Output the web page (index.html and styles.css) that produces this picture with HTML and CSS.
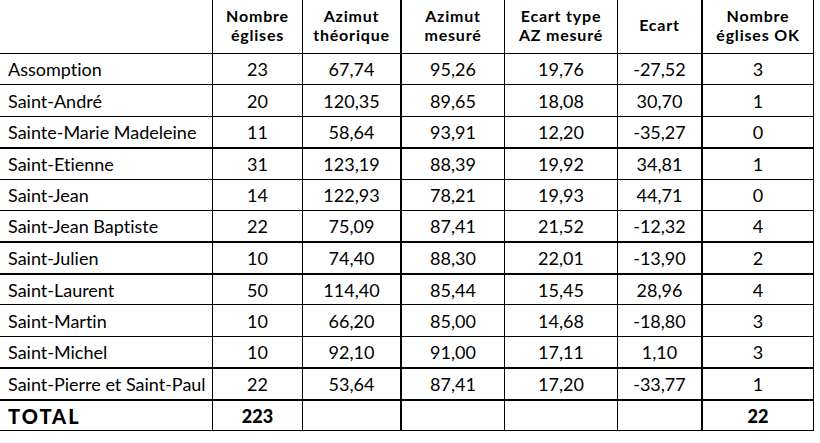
FILE: index.html
```html
<!DOCTYPE html>
<html lang="fr">
<head>
<meta charset="utf-8">
<title>Tableau</title>
<link rel="stylesheet" href="styles.css">
</head>
<body>
<div class="table">
  <div class="row head">
    <div class="c name"></div>
    <div class="c">Nombre<br>églises</div>
    <div class="c">Azimut<br>théorique</div>
    <div class="c">Azimut<br>mesuré</div>
    <div class="c">Ecart type<br>AZ mesuré</div>
    <div class="c">Ecart</div>
    <div class="c">Nombre<br>églises OK</div>
  </div>
  <div class="row">
    <div class="c name">Assomption</div><div class="c">23</div><div class="c">67,74</div><div class="c">95,26</div><div class="c">19,76</div><div class="c">-27,52</div><div class="c">3</div>
  </div>
  <div class="row">
    <div class="c name">Saint-André</div><div class="c">20</div><div class="c">120,35</div><div class="c">89,65</div><div class="c">18,08</div><div class="c">30,70</div><div class="c">1</div>
  </div>
  <div class="row thick">
    <div class="c name">Sainte-Marie Madeleine</div><div class="c">11</div><div class="c">58,64</div><div class="c">93,91</div><div class="c">12,20</div><div class="c">-35,27</div><div class="c">0</div>
  </div>
  <div class="row">
    <div class="c name">Saint-Etienne</div><div class="c">31</div><div class="c">123,19</div><div class="c">88,39</div><div class="c">19,92</div><div class="c">34,81</div><div class="c">1</div>
  </div>
  <div class="row">
    <div class="c name">Saint-Jean</div><div class="c">14</div><div class="c">122,93</div><div class="c">78,21</div><div class="c">19,93</div><div class="c">44,71</div><div class="c">0</div>
  </div>
  <div class="row thick">
    <div class="c name">Saint-Jean Baptiste</div><div class="c">22</div><div class="c">75,09</div><div class="c">87,41</div><div class="c">21,52</div><div class="c">-12,32</div><div class="c">4</div>
  </div>
  <div class="row thick">
    <div class="c name">Saint-Julien</div><div class="c">10</div><div class="c">74,40</div><div class="c">88,30</div><div class="c">22,01</div><div class="c">-13,90</div><div class="c">2</div>
  </div>
  <div class="row">
    <div class="c name">Saint-Laurent</div><div class="c">50</div><div class="c">114,40</div><div class="c">85,44</div><div class="c">15,45</div><div class="c">28,96</div><div class="c">4</div>
  </div>
  <div class="row">
    <div class="c name">Saint-Martin</div><div class="c">10</div><div class="c">66,20</div><div class="c">85,00</div><div class="c">14,68</div><div class="c">-18,80</div><div class="c">3</div>
  </div>
  <div class="row thick">
    <div class="c name">Saint-Michel</div><div class="c">10</div><div class="c">92,10</div><div class="c">91,00</div><div class="c">17,11</div><div class="c">1,10</div><div class="c">3</div>
  </div>
  <div class="row thick">
    <div class="c name">Saint-Pierre et Saint-Paul</div><div class="c">22</div><div class="c">53,64</div><div class="c">87,41</div><div class="c">17,20</div><div class="c">-33,77</div><div class="c">1</div>
  </div>
  <div class="row total">
    <div class="c name">TOTAL</div><div class="c">223</div><div class="c"></div><div class="c"></div><div class="c"></div><div class="c"></div><div class="c">22</div>
  </div>
</div>
</body>
</html>
```

FILE: styles.css
```css
html, body {
  margin: 0;
  padding: 0;
  background: #ffffff;
}

.table {
  display: grid;
  width: 814px;
  grid-template-columns: 213px 90px 99px 103px 113px 85px 111px;
  grid-template-rows: 54px 31px 32px 32px 31px 31px 32px 32px 30px 32px 32px 32px 30px;
  font-family: "Lato", "Liberation Sans", sans-serif;
  font-size: 18px;
  font-variant-ligatures: none;
  color: #000;
}

.row {
  display: contents;
}

.c {
  box-sizing: border-box;
  border-right: 1px solid #000;
  border-bottom: 1px solid #000;
  display: flex;
  align-items: center;
  justify-content: center;
  text-align: center;
  line-height: 20px;
}

.c:nth-child(3),
.c:nth-child(6) {
  border-right-width: 2px;
}

.thick > .c {
  border-bottom-width: 2px;
}

.c.name {
  justify-content: flex-start;
  text-align: left;
  padding-left: 8px;
}

.head > .c {
  font-weight: 700;
  font-size: 16px;
  letter-spacing: 0.8px;
  line-height: 19px;
  padding-bottom: 4px;
}

.total > .c {
  font-weight: 900;
  font-size: 18px;
}

.total > .c.name {
  font-size: 20px;
  letter-spacing: 2px;
}
```
